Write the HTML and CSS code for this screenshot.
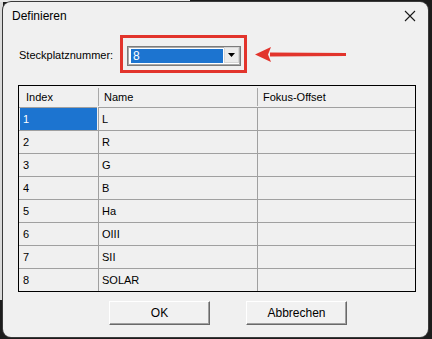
FILE: index.html
```html
<!doctype html>
<html>
	<head>
		<title>Definieren</title>
		<meta name="viewport" content="width=device-width, initial-scale=1.0">
		<link rel="stylesheet" href="styles.css">
	</head>
	<body>

		<!--	The dialog window.	-->
		<div class="window">

			<div class="titlebar">
				<span class="title">Definieren</span>
				<svg class="close" width="12" height="12" viewBox="0 0 12 12">
					<path d="M1 1 L11 11 M11 1 L1 11" stroke="#1a1a1a" stroke-width="1.1" fill="none"/>
				</svg>
			</div>

			<div class="content">

				<div class="slotRow">
					<label class="slotLabel">Steckplatznummer:</label>
					<div class="mark">
						<div class="combo">
							<span class="comboValue">8</span>
							<span class="comboButton">
								<svg width="7" height="4" viewBox="0 0 7 4"><path d="M0 0 H7 L3.5 4 Z" fill="#000"/></svg>
							</span>
						</div>
					</div>
					<svg class="arrow" width="98" height="20" viewBox="0 0 98 20">
						<path d="M18 8.6 L94 9 L94 12 L18 12.4 Z" fill="#e2342c"/>
						<path d="M3 10.5 L19 3 L16 10.5 L19 18 Z" fill="#e2342c"/>
					</svg>
				</div>

				<!--	The slot grid.	-->
				<div class="grid">
					<div class="head">Index</div>
					<div class="head sep">Name</div>
					<div class="head sep">Fokus-Offset</div>

					<div class="cell idx selected">1</div><div class="cell name">L</div><div class="cell"></div>
					<div class="cell idx">2</div><div class="cell name">R</div><div class="cell"></div>
					<div class="cell idx">3</div><div class="cell name">G</div><div class="cell"></div>
					<div class="cell idx">4</div><div class="cell name">B</div><div class="cell"></div>
					<div class="cell idx">5</div><div class="cell name">Ha</div><div class="cell"></div>
					<div class="cell idx">6</div><div class="cell name">OIII</div><div class="cell"></div>
					<div class="cell idx">7</div><div class="cell name">SII</div><div class="cell"></div>
					<div class="cell idx">8</div><div class="cell name">SOLAR</div><div class="cell"></div>
				</div>

				<div class="buttons">
					<button class="btn">OK</button>
					<button class="btn">Abbrechen</button>
				</div>

			</div>
		</div>

	</body>
</html>
```

FILE: styles.css
```css
html, body {
	margin: 0;
	padding: 0;
	width: 432px;
	height: 339px;
	overflow: hidden;
}

body {
	box-sizing: border-box;
	padding: 2px 4px 2px 3px;
	font-family: "Liberation Sans", Arial, sans-serif;
	font-size: 11px;
	color: #000;
	background:
		linear-gradient(#e8e8e8, #e8e8e8) 0 0 / 190px 2px no-repeat,
		linear-gradient(#dadada, #dadada) 0 0 / 3px 300px no-repeat,
		#1c1c1c;
}

.window {
	height: 335px;
	background-color: #f0f0f0;
	border-radius: 8px;
	box-shadow: 0 0 0 1px #3a3a3a;
	display: flex;
	flex-direction: column;
}

.titlebar {
	height: 30px;
	display: flex;
	align-items: flex-start;
	justify-content: space-between;
	padding: 7px 12px 0 9px;
	box-sizing: border-box;
}

.title {
	font-size: 12px;
	line-height: 14px;
	color: #000;
}

.close {
	margin-top: 1px;
}

.content {
	padding: 3px 0 0 15px;
}

.slotRow {
	display: flex;
	align-items: center;
}

.slotLabel {
	width: 102px;
	padding-left: 1px;
	box-sizing: border-box;
	font-size: 11px;
	padding-top: 2px;
}

.mark {
	border: 3px solid #e2342c;
	padding: 8px 3px 4px 4px;
}

.combo {
	width: 114px;
	height: 20px;
	box-sizing: border-box;
	border: 1px solid #7c7c7c;
	box-shadow: inset 0 0 0 1px #a9a9a9;
	background-color: #fff;
	display: flex;
	padding: 1px 2px 1px 2px;
}

.comboValue {
	flex: 1;
	margin: 1px;
	background-color: #1c74d0;
	color: #fff;
	font-size: 12px;
	line-height: 14px;
	padding-left: 2px;
}

.comboButton {
	width: 15px;
	height: 16px;
	margin: -1px -1px -1px 0;
	box-sizing: border-box;
	background-color: #ececec;
	border: 1px solid #d6d6d6;
	display: flex;
	align-items: center;
	justify-content: center;
}

.arrow {
	margin-left: 5px;
	display: block;
}

.grid {
	margin-top: 12px;
	width: 398px;
	box-sizing: border-box;
	border: 1px solid #000;
	display: grid;
	grid-template-columns: 79px 159px 1fr;
}

.head {
	height: 21px;
	line-height: 22px;
	padding-left: 7px;
	position: relative;
}

.head.sep {
	padding-left: 6px;
}

.head.sep::before {
	content: "";
	position: absolute;
	left: 0;
	top: 2px;
	bottom: 1px;
	border-left: 1px solid #a8a8a8;
}

.cell {
	height: 22px;
	line-height: 23px;
	border-top: 1px solid #a0a0a0;
	border-left: 1px solid #a0a0a0;
	padding-left: 3px;
}

.cell.idx {
	border-left: none;
	padding-left: 4px;
}

.selected {
	background-color: #1c74d0;
	color: #fff;
	box-shadow: inset 1px 0 0 #f0f0f0;
	margin-right: 1px;
}

.buttons {
	display: flex;
	gap: 36px;
	padding-left: 91px;
	margin-top: 9px;
}

.btn {
	width: 101px;
	height: 24px;
	background-color: #f1f1f1;
	border: 1px solid;
	border-color: #fff #696969 #696969 #fff;
	box-shadow: inset -1px -1px 0 #a0a0a0;
	font-family: "Liberation Sans", Arial, sans-serif;
	font-size: 12px;
	color: #000;
	padding: 0;
}
```
